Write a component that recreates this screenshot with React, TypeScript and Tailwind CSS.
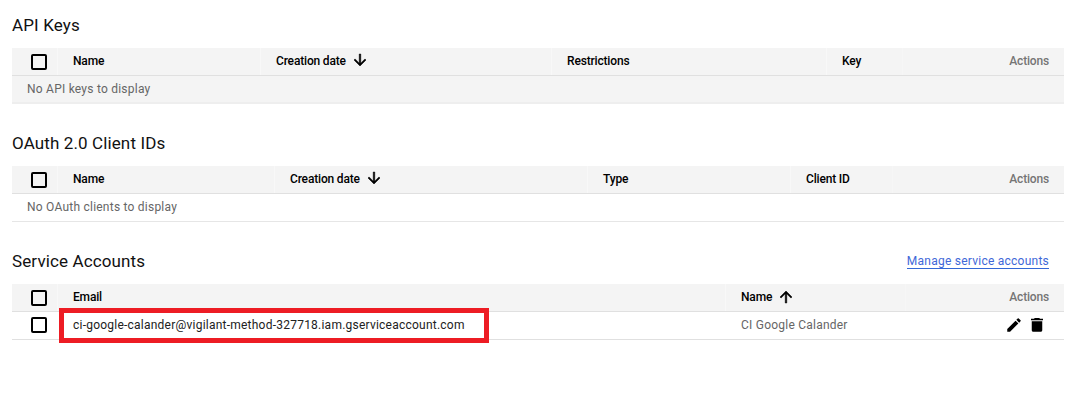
import type { ReactNode } from "react";

function Checkbox({ label }: { label: string }) {
  return (
    <span
      role="checkbox"
      aria-checked="false"
      aria-label={label}
      className="block h-4 w-4 rounded-[2px] border-2 border-black"
    />
  );
}

function Arrow({ up = false }: { up?: boolean }) {
  return (
    <svg
      viewBox="0 0 24 24"
      className={up ? "mb-px ml-[5px] h-[18px] w-[18px]" : "mb-[2px] ml-[5px] h-[18px] w-[18px] rotate-180"}
      fill="#000"
      stroke="#000"
      strokeWidth="0.7"
    >
      <path d="M4 12l1.41 1.41L11 7.83V20h2V7.83l5.58 5.59L20 12l-8-8-8 8z" />
    </svg>
  );
}

function HeaderCell({ width, children }: { width: string; children?: ReactNode }) {
  return (
    <div className={`flex h-full shrink-0 items-center border-l border-[#f8f8f8] pl-[15px] pb-px ${width}`}>
      {children}
    </div>
  );
}

function HeaderRow({ children }: { children: ReactNode }) {
  return (
    <div className="flex h-7 items-center border-b border-[#e0e0e0] bg-[#f4f4f4] text-[12px] font-medium tracking-[-0.17px] text-black">
      <div className="flex h-full w-[45px] shrink-0 pl-[19px] pt-[6px]">
        <Checkbox label="Select all" />
      </div>
      {children}
      <div className="flex h-full flex-1 items-center justify-end border-l border-[#f6f6f6] pr-[15px] pb-px text-[#757575]">
        Actions
      </div>
    </div>
  );
}

function Section({ title, action, children }: { title: string; action?: ReactNode; children: ReactNode }) {
  return (
    <section className="h-[118px]">
      <div className="flex h-12 items-center justify-between pr-[15px] pt-[3px]">
        <h2 className="pb-[2px] text-[17px] leading-6 tracking-[0.12px] text-[#111]">{title}</h2>
        {action}
      </div>
      {children}
    </section>
  );
}

export default function App() {
  return (
    <main className="h-[412px] w-[1085px] overflow-hidden bg-white pl-3 font-['Roboto',sans-serif]">
      <div className="w-[1052px]">
        <Section title="API Keys">
          <HeaderRow>
            <HeaderCell width="w-[203px]">Name</HeaderCell>
            <HeaderCell width="w-[291px]">
              Creation date
              <Arrow />
            </HeaderCell>
            <HeaderCell width="w-[275px]">Restrictions</HeaderCell>
            <HeaderCell width="w-[76px]">Key</HeaderCell>
          </HeaderRow>
          <div className="flex h-7 items-center border-b-2 border-[#eeeeee] bg-[#f4f4f4] pl-[15px] text-[12px] tracking-[0.23px] text-[#666]">
            No API keys to display
          </div>
        </Section>

        <Section title="OAuth 2.0 Client IDs">
          <HeaderRow>
            <HeaderCell width="w-[217px]">Name</HeaderCell>
            <HeaderCell width="w-[313px]">
              Creation date
              <Arrow />
            </HeaderCell>
            <HeaderCell width="w-[203px]">Type</HeaderCell>
            <HeaderCell width="w-[102px]">Client ID</HeaderCell>
          </HeaderRow>
          <div className="flex h-7 items-center border-b border-[#e6e6e6] pb-px pl-[15px] text-[12px] tracking-[0.23px] text-[#666]">
            No OAuth clients to display
          </div>
        </Section>

        <Section
          title="Service Accounts"
          action={
            <a
              href="#service-accounts"
              className="mb-px border-b border-[#3367d6] pt-[2px] text-[12px] leading-[13px] tracking-[0.24px] text-[#3f68d8]"
            >
              Manage service accounts
            </a>
          }
        >
          <HeaderRow>
            <HeaderCell width="w-[668px]">Email</HeaderCell>
            <HeaderCell width="w-[180px]">
              Name
              <Arrow up />
            </HeaderCell>
          </HeaderRow>
          <div className="relative flex h-7 items-center border-b border-[#e0e0e0] pb-px text-[12px] tracking-[0.23px]">
            <div className="w-[45px] shrink-0 pl-[19px]">
              <Checkbox label="Select account" />
            </div>
            <div className="w-[668px] shrink-0 pl-4 text-[#212121]">
              ci-google-calander@vigilant-method-327718.iam.gserviceaccount.com
            </div>
            <div className="flex-1 pl-4 text-[#666]">CI Google Calander</div>
            <div className="flex items-center gap-[5px] pr-[18px]">
              <svg viewBox="0 0 24 24" className="h-[18px] w-[18px]" fill="#000">
                <path d="M3 17.25V21h3.75L17.81 9.94l-3.75-3.75L3 17.25zM20.71 7.04a1 1 0 0 0 0-1.41l-2.34-2.34a1 1 0 0 0-1.41 0l-1.83 1.83 3.75 3.75 1.83-1.83z" />
              </svg>
              <svg viewBox="0 0 24 24" className="h-[18px] w-[18px]" fill="#000">
                <path d="M5 19c0 1.1.9 2 2 2h10c1.1 0 2-.9 2-2V7H5v12zM20 3.5h-4l-1-1H9l-1 1H4v2h16v-2z" />
              </svg>
            </div>
            <div className="pointer-events-none absolute -top-1 left-[47px] h-[35px] w-[430px] border-[5px] border-[#ed1c24]" />
          </div>
        </Section>
      </div>
    </main>
  );
}
